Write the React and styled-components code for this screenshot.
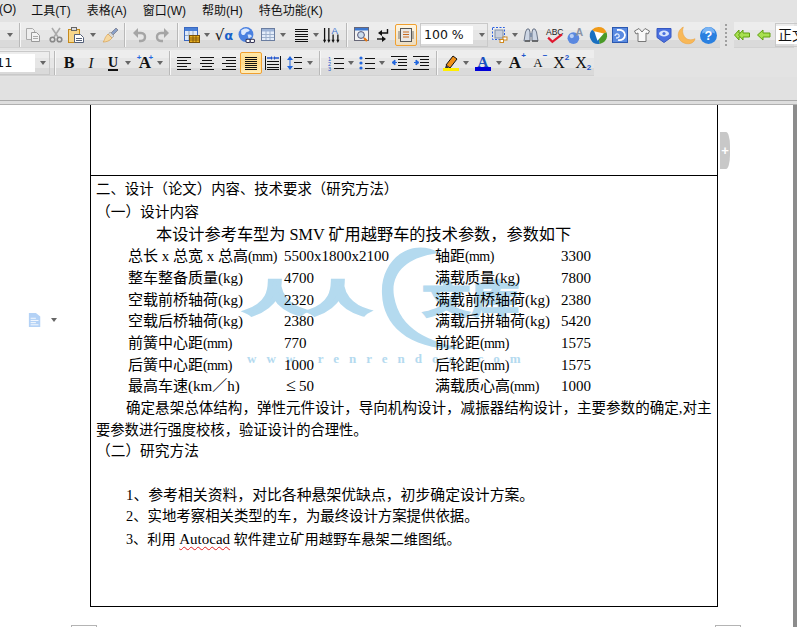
import React from 'react';
import styled, { createGlobalStyle } from 'styled-components';

const Global = createGlobalStyle`
  html, body { margin: 0; height: 100%; overflow: hidden; background: #e3e3e3; }
  #root { height: 100%; }
`;

const Window = styled.div`
  width: 797px;
  height: 627px;
  display: flex;
  flex-direction: column;
  overflow: hidden;
  background: #e3e3e3;
`;

const MenuBar = styled.div`
  height: 18px;
  display: flex;
  align-items: center;
  font: 12px "Liberation Sans", "Noto Sans CJK SC", sans-serif;
  color: #111;
  white-space: nowrap;
`;

const MenuItem = styled.span`
  margin-left: ${p => p.$ml}px;
`;

const Toolbar = styled.div`
  height: 26px;
  margin-top: ${p => p.$mt}px;
  display: flex;
  overflow: hidden;
`;

const Band = styled.div`
  width: ${p => p.$w}px;
  flex: none;
  display: flex;
  align-items: center;
  background: linear-gradient(#ededed 0 30%, #e6e6e6 30% 70%, #dadada 70% 100%);
  box-shadow: inset 0 -1px 0 #d2d2d2;
`;

const Tool = styled.span`
  flex: none;
  width: ${p => p.$w || 16}px;
  height: 16px;
  margin-left: ${p => p.$ml}px;
  display: flex;
  align-items: center;
  justify-content: center;
`;

const Active = styled(Tool)`
  width: 22px;
  height: 22px;
  box-sizing: border-box;
  border: 1px solid #f0a030;
  border-radius: 2px;
  background: ${p => (p.$warm ? 'linear-gradient(#ffe9a8, #ffd98a 50%, #ffeebb)' : 'linear-gradient(#fff6e2, #ecdcc0)')};
`;

const Caret = styled.span`
  flex: none;
  width: 0;
  height: 0;
  margin-left: ${p => p.$ml + 1}px;
  margin-right: 1px;
  border-left: 3px solid transparent;
  border-right: 3px solid transparent;
  border-top: 4px solid #666;
`;

const Sep = styled.span`
  flex: none;
  width: 1px;
  height: 24px;
  margin-left: ${p => p.$ml}px;
  background: #b9b9b9;
  box-shadow: 1px 0 0 #f7f7f7;
`;

const Grip = styled.span`
  flex: none;
  width: 2px;
  height: 22px;
  margin: 2px 7px 0 5px;
  background: repeating-linear-gradient(#a0a0a0 0 2px, transparent 2px 4px);
`;

const Combo = styled.span`
  flex: none;
  width: ${p => p.$w}px;
  height: 24px;
  margin-left: ${p => p.$ml}px;
  box-sizing: border-box;
  border: 1px solid #c9c9c9;
  border-left-width: ${p => (p.$open ? 0 : 1)}px;
  display: flex;
  align-items: center;
`;

const ComboField = styled.span`
  width: ${p => p.$w}px;
  height: 18px;
  flex: none;
  text-indent: ${p => p.$pad}px;
  box-sizing: border-box;
  background: #fff;
  color: #111;
  white-space: nowrap;
  overflow: hidden;
  font: ${p => p.$size || 13}px/18px "DejaVu Sans", "Noto Sans CJK SC", sans-serif;
`;

const Letter = styled.span`
  font: ${p => (p.$italic ? 'italic' : 'normal')} ${p => (p.$bold ? 'bold' : 'normal')} ${p => p.$size || 15}px/16px "Liberation Serif", serif;
  color: #111;
  position: relative;
  ${p => p.$under && 'border-bottom: 2px solid #111; line-height: 13px;'}
`;

const Mark = styled.sup`
  position: absolute;
  left: 100%;
  top: ${p => p.$top}px;
  margin: 0;
  color: #2255cc;
  font: bold 8px/8px "Liberation Sans", sans-serif;
`;

const TwinMark = styled.span`
  position: absolute;
  left: -2px;
  right: -2px;
  top: -1px;
  display: flex;
  justify-content: space-between;
  color: #2266dd;
  font: bold 8px/8px "Liberation Sans", sans-serif;
`;

const Formula = styled.span`
  font: 15px/16px "DejaVu Sans", sans-serif;
  color: #111;
  white-space: nowrap;
  b { color: #1660c8; font: bold 13px/16px "DejaVu Sans", sans-serif; }
`;

const Strip = styled.div`
  height: 23px;
  flex: none;
  margin-top: 1px;
  background: #e1e1e1;
  border-bottom: 1px solid #a9a9a9;
  box-shadow: 0 3px 0 #dedede;
`;

const Workspace = styled.div`
  flex: 1;
  margin-top: 3px;
  display: flex;
  min-height: 0;
  position: relative;
  border-top: 1px solid #b0b0b0;
`;

const Page = styled.div`
  flex: 1;
  background: #fff;
  position: relative;
  overflow: hidden;
`;

const Edge = styled.div`
  width: 4px;
  flex: none;
  background: #8c8c8c;
`;

const Sheet = styled.div`
  width: 628px;
  margin-left: 90px;
  box-sizing: border-box;
  border: solid #000;
  border-width: 0 1px 1px;
  position: relative;
  z-index: 1;
  font-family: "Liberation Serif", "Noto Sans CJK SC", serif;
  color: #000;
`;

const TopCell = styled.div`
  height: 70px;
  border-bottom: 1px solid #000;
`;

const BodyCell = styled.div`
  height: 430px;
  box-sizing: border-box;
  padding: 2px 5px 0;
`;

const Line = styled.div`
  height: ${p => p.$h || 21.8}px;
  line-height: ${p => p.$h || 21.8}px;
  margin-top: ${p => p.$mt || 0}px;
  padding-left: ${p => p.$indent || 0}px;
  font-size: ${p => p.$size || 15}px;
  white-space: nowrap;
`;

const SpecGrid = styled.div`
  display: grid;
  grid-template-columns: 156px 151px 126px 1fr;
  grid-auto-rows: 21.7px;
  padding-left: 32px;
  font-size: 15px;
  line-height: 21.7px;
  white-space: nowrap;
`;

const Unit = styled.span`
  font-size: 14px;
  letter-spacing: -0.6px;
`;

const LessEqual = styled.span`
  display: inline-block;
  width: 13px;
  margin-left: 2px;
  font-size: 18px;
  line-height: 16px;
`;

const Squiggle = styled.span`
  text-decoration: underline wavy #e02020 1px;
  text-underline-offset: 2px;
  font-size: 15px;
`;

const PageCorners = styled.div`
  display: flex;
  margin: 18px 0 0 71px;
  gap: 618px;
`;

const Corner = styled.div`
  width: 24px;
  height: 6px;
  border: 1px solid #b4b4b4;
  border-bottom: 0;
`;

const Watermark = styled.svg`
  position: absolute;
  left: 240px;
  top: 131px;
  width: 300px;
  height: 140px;
  z-index: 0;
`;

const SideTab = styled.div`
  position: absolute;
  left: 720px;
  top: 27px;
  width: 10px;
  height: 37px;
  background: #c8c8c8;
  border-radius: 0 4px 4px 0 / 0 14px 14px 0;
  color: #fff;
  font: bold 13px/37px "Liberation Sans", sans-serif;
  text-align: center;
`;

const MarginHint = styled.div`
  position: absolute;
  left: 28px;
  top: 208px;
  display: flex;
  align-items: center;
  gap: 5px;
`;

const Ico = styled.svg.attrs({ viewBox: '0 0 16 16' })`
  width: ${p => p.$s || 16}px;
  height: ${p => p.$s || 16}px;
  flex: none;
  overflow: visible;
`;

const Rows = ({ y, x1 = 1, x2 = 15, color = '#111' }) => (
  <path d={y.map(v => `M${x1} ${v}.5H${x2}`).join('')} stroke={color} fill="none" />
);

const Copy = () => (
  <Ico>
    <path d="M1.5 1.5h6l2 2v9h-8z" fill="#eee" stroke="#aaa" />
    <path d="M6.5 5.5h5l3 3v6h-8z" fill="#f2f2f2" stroke="#999" />
    <path d="M8 9.5h5M8 11.5h5" stroke="#aaa" />
  </Ico>
);
const Cut = () => (
  <Ico>
    <path d="M4 1l6 9M12 1L6 10" stroke="#aaa" strokeWidth="1.6" fill="none" />
    <circle cx="4.5" cy="12.5" r="2.3" fill="none" stroke="#888" strokeWidth="1.6" />
    <circle cx="11.5" cy="12.5" r="2.3" fill="none" stroke="#888" strokeWidth="1.6" />
  </Ico>
);
const Paste = () => (
  <Ico>
    <rect x="0.5" y="2.5" width="11" height="13" fill="#f7d68a" stroke="#c68a1c" />
    <rect x="3.5" y="0.5" width="5" height="3" fill="#ddd" stroke="#666" />
    <path d="M6.5 7.5h6l3 3v5h-9z" fill="#fff" stroke="#55617a" />
    <path d="M8 11.5h6M8 13.5h6" stroke="#55617a" />
  </Ico>
);
const Brush = () => (
  <Ico>
    <path d="M9 6l5-5 2 2-5 5z" fill="#8aa0c8" stroke="#667" strokeWidth=".6" />
    <path d="M8 5l4 4-2 2-4-3z" fill="#d8d8d8" stroke="#999" strokeWidth=".6" />
    <path d="M6 7l4 4c-2 3-6 4-9 4 2-2 1-4 5-8z" fill="#f6d8a0" stroke="#d8a050" strokeWidth=".7" />
  </Ico>
);
const Undo = ({ flip }) => (
  <Ico style={flip ? { transform: 'scaleX(-1)' } : undefined}>
    <path d="M3 6h6c3 0 4 2 4 4s-1 4-4 4H7" fill="none" stroke="#a5a5a5" strokeWidth="2.4" />
    <path d="M6 1L1 6l5 5z" fill="#a5a5a5" />
  </Ico>
);
const YellowTable = () => (
  <Ico>
    <rect x="0.5" y="0.5" width="13" height="13" fill="#dfe9fa" stroke="#3a68c0" />
    <rect x="1" y="1" width="12" height="3" fill="#4a80d8" />
    <path d="M5 4v9M9 4v9M1 8.5h12" stroke="#9ab" />
    <rect x="5.5" y="8.5" width="10" height="7" fill="#e8b020" stroke="#7a5208" />
    <path d="M5.5 11h10M5.5 13h10M9 8.5v7M12 8.5v7" stroke="#7a5208" strokeWidth=".8" />
  </Ico>
);
const GlobeLink = () => (
  <Ico $s={17}>
    <circle cx="7.5" cy="7" r="7" fill="#4a80e0" />
    <path d="M3 3c3-2 6-2 8 0-1 2-3 1-4 3s-3 2-4 0z" fill="#dce8fc" />
    <path d="M9 7c2 0 4 0 4 2l-3 2z" fill="#cfe0fa" />
    <rect x="7.5" y="11.5" width="4" height="3" rx="1" fill="#fff" stroke="#335" />
    <rect x="11.5" y="11.5" width="4" height="3" rx="1" fill="#fff" stroke="#335" />
  </Ico>
);
const GridTable = () => (
  <Ico>
    <rect x="1.5" y="1.5" width="13" height="12" fill="#e4edfa" stroke="#6a7da0" />
    <rect x="2" y="2" width="12" height="2.5" fill="#9db4d8" />
    <path d="M6 4v9M10 4v9M2 7.5h12M2 10.5h12" stroke="#9db0cc" />
  </Ico>
);
const HeavyRows = () => (
  <Ico>
    <Rows y={[2, 4, 7, 9, 12, 14]} x1={2} x2={15} />
  </Ico>
);
const ColsA = () => (
  <Ico $s={17}>
    <path d="M1.5 1v12M5.5 1v12M9.5 7v6M14 7v6" stroke="#111" strokeWidth="1.2" />
    <path d="M0 12l1.5 3 1.5-3zM4 12l1.5 3 1.5-3zM8 12l1.5 3 1.5-3zM12.5 12l1.5 3 1.5-3z" fill="#111" />
    <text x="8" y="7" fontFamily="Liberation Sans" fontSize="9" fill="#3a70d0">A</text>
  </Ico>
);
const DocSearch = () => (
  <Ico>
    <rect x="0.5" y="0.5" width="14" height="13" fill="#f2f2f2" stroke="#667" />
    <rect x="1" y="1" width="13" height="2.5" fill="#3d78d0" />
    <circle cx="7" cy="8" r="3.4" fill="#cde" stroke="#557" />
    <path d="M10 11l3 3" stroke="#e87810" strokeWidth="2.2" />
  </Ico>
);
const ReturnArrows = () => (
  <Ico>
    <path d="M12.5 2v4H6" fill="none" stroke="#111" strokeWidth="1.4" />
    <path d="M7 3L3 6l4 3z" fill="#111" />
    <path d="M2 12h6" stroke="#111" strokeWidth="1.4" />
    <path d="M7 9l4 3-4 3z" fill="#111" />
  </Ico>
);
const PageFrame = () => (
  <Ico>
    <rect x="2.5" y="1.5" width="11" height="13" fill="#e8e8e8" stroke="#555" />
    <path d="M5 5h6M5 7.5h6M5 10h6" stroke="#c86a20" />
    <path d="M1 4v8M15 4v8" stroke="#777" />
  </Ico>
);
const DashedSelect = () => (
  <Ico>
    <rect x="0.5" y="0.5" width="12" height="12" fill="none" stroke="#2a60e0" strokeDasharray="2 1.5" />
    <rect x="3" y="3" width="8" height="8" fill="#c9cfdb" stroke="#8090a8" />
    <rect x="11" y="10" width="4" height="3" fill="#fff" stroke="#d08a20" />
    <rect x="8" y="12.5" width="3.5" height="3" fill="#fff" stroke="#d08a20" />
  </Ico>
);
const Binoculars = () => (
  <Ico>
    <path d="M1 14l1.5-9 1.5-3h2l1 3v9zM9 5l1-3h2l1.5 3L15 14H9z" fill="#cdd6e4" stroke="#6c7688" />
    <path d="M7 6h2v4H7z" fill="#8090a8" />
    <path d="M2 14h5M9 14h6" stroke="#555" strokeWidth="1.5" />
  </Ico>
);
const SpellCheck = () => (
  <Ico $s={17}>
    <text x="0" y="7.5" fontFamily="Liberation Sans" fontSize="8" fill="#222">ABC</text>
    <path d="M2 10l4 4 9-7" fill="none" stroke="#e01830" strokeWidth="2" />
  </Ico>
);
const BallA = () => (
  <Ico $s={17}>
    <circle cx="6" cy="10.5" r="5.5" fill="#5a88e0" />
    <circle cx="4.5" cy="8.5" r="2" fill="#b9d0f6" />
    <text x="8" y="8" fontFamily="Liberation Sans" fontWeight="bold" fontSize="10" fill="#8a94a6">A</text>
  </Ico>
);
const ColorWheel = () => (
  <Ico $s={17}>
    <path d="M8 0a8 8 0 0 1 7.5 5L8 8 2 2.5A8 8 0 0 1 8 0z" fill="#f09a18" />
    <path d="M15.5 5A8 8 0 0 1 9 15.9L8 8z" fill="#4a9a28" />
    <path d="M9 15.9A8 8 0 0 1 2 2.5L8 8z" fill="#1a70c0" />
    <path d="M4 4l9 2-6 7z" fill="#fff" />
  </Ico>
);
const BlueD = () => (
  <Ico>
    <rect x="0.5" y="0.5" width="15" height="15" fill="#5a8ae0" stroke="#2a58b0" />
    <path d="M5 3c5-1 8 2 8 5s-3 6-7 5" fill="none" stroke="#fff" strokeWidth="1.8" />
    <path d="M3 9c0-2 3-3 4-1s-1 3-3 3" fill="none" stroke="#dce8fc" strokeWidth="1.4" />
  </Ico>
);
const Shirt = () => (
  <Ico>
    <path d="M5 1.5L.5 4l1.5 3 2-1v8.5h8V6l2 1 1.5-3L11 1.5 8 5z" fill="#f8f8f8" stroke="#777" />
  </Ico>
);
const Shield = () => (
  <Ico>
    <path d="M1 1.5h14v9L8 15.5 1 10.5z" fill="#4a70e0" stroke="#3658c0" />
    <ellipse cx="8" cy="6.5" rx="5" ry="3" fill="#d8e4fc" />
    <circle cx="8" cy="6.5" r="1.6" fill="#4a70e0" />
  </Ico>
);
const Moon = () => (
  <Ico $s={17}>
    <path d="M5 0C1 2-1 7 1 11s8 6 12 4c2-1 3-3 3-4-4 2-8 1-10-2S4 3 5 0z" fill="#f8b858" stroke="#e8a040" strokeWidth=".5" />
  </Ico>
);
const Help = () => (
  <Ico $s={17}>
    <circle cx="8" cy="8" r="8" fill="#2a80e0" />
    <path d="M2 6a6 6 0 0 1 12 0c-4-2-8-2-12 0z" fill="#7ab4f4" />
    <text x="8" y="12.5" textAnchor="middle" fontFamily="Liberation Sans" fontWeight="bold" fontSize="12" fill="#fff">?</text>
  </Ico>
);
const GreenLeft = ({ double }) => (
  <Ico>
    {double && <path d="M5 3L0.5 8 5 13v-3h2V6H5z" fill="#a8e050" stroke="#60a010" />}
    <path d={double ? 'M9 3L4.5 8 9 13v-3h6.500V6H9z' : 'M7 3L1.500 8 7 13v-3h7V6H7z'} fill="#a8e050" stroke="#60a010" />
  </Ico>
);
const AlignLeft = () => <Ico><Rows y={[2, 8, 14]} /><Rows y={[5, 11]} x2={11} /></Ico>;
const AlignCenter = () => <Ico><Rows y={[2, 8, 14]} /><Rows y={[5, 11]} x1={3} x2={13} /></Ico>;
const AlignRight = () => <Ico><Rows y={[2, 8, 14]} /><Rows y={[5, 11]} x1={5} x2={15} /></Ico>;
const Justify = () => <Ico><Rows y={[2, 4, 6, 8, 10, 12, 14]} x1={2} x2={14} color="#111" /></Ico>;
const Distribute = () => (
  <Ico>
    <path d="M.5 1v14M15.500 1v14" stroke="#111" />
    <Rows y={[6, 9, 12, 14]} x1={2} x2={14} />
    <path d="M2 3h4M10 3h4" stroke="#2255cc" strokeWidth="1.4" />
    <path d="M6 1l2 2-2 2zM10 1L8 3l2 2z" fill="#2255cc" />
  </Ico>
);
const Spacing = () => (
  <Ico>
    <path d="M3 1L0 5h6zM3 15L0 11h6z" fill="#2266dd" />
    <path d="M3 4v8" stroke="#2266dd" />
    <Rows y={[2, 7, 13]} x1={7} x2={15} />
  </Ico>
);
const NumList = () => (
  <Ico>
    <text x="0" y="5.500" fontFamily="Liberation Sans" fontSize="5.500" fill="#2255cc">1</text>
    <text x="0" y="10.500" fontFamily="Liberation Sans" fontSize="5.500" fill="#2255cc">2</text>
    <text x="0" y="15.500" fontFamily="Liberation Sans" fontSize="5.500" fill="#2255cc">3</text>
    <Rows y={[3, 8, 13]} x1={6} x2={16} />
  </Ico>
);
const BulletList = () => (
  <Ico>
    <circle cx="2" cy="3" r="1.6" fill="#2266dd" />
    <circle cx="2" cy="8" r="1.6" fill="#2266dd" />
    <circle cx="2" cy="13" r="1.6" fill="#2266dd" />
    <Rows y={[3, 8, 13]} x1={6} x2={16} />
  </Ico>
);
const Indent = ({ inc }) => (
  <Ico>
    <Rows y={[1, 14]} x1={0} x2={16} />
    <Rows y={[4, 7, 10]} x1={7} x2={16} />
    {inc
      ? <path d="M1 7.500h3M3 5l3 2.500L3 10z" fill="#2266dd" stroke="#2266dd" />
      : <path d="M3 7.500h3M4 5L1 7.500 4 10z" fill="#2266dd" stroke="#2266dd" />}
  </Ico>
);
const Highlighter = () => (
  <Ico>
    <path d="M3 10l7-9 4 3-7 9z" fill="#f09018" stroke="#111" strokeWidth="1" />
    <path d="M3 10l-1 3 4 0z" fill="#333" />
    <rect x="0" y="13" width="16" height="3" fill="#ffee00" />
  </Ico>
);
const FontColor = () => (
  <Ico>
    <text x="8" y="11.500" textAnchor="middle" fontFamily="Liberation Serif" fontWeight="bold" fontSize="15" fill="#1a50c0">A</text>
    <rect x="0" y="12" width="16" height="4" fill="#0000d8" />
  </Ico>
);
const DocHint = () => (
  <Ico $s={14}>
    <path d="M1 0h8l5 4v12H1z" fill="#b4d2f6" />
    <path d="M3 6h6M3 8.500h9M3 11h6M3 13.500h9" stroke="#fff" />
  </Ico>
);

const specs = [
  ['总长 x 总宽 x 总高(mm)', '5500x1800x2100', '轴距(mm)', '3300'],
  ['整车整备质量(kg)', '4700', '满载质量(kg)', '7800'],
  ['空载前桥轴荷(kg)', '2320', '满载前桥轴荷(kg)', '2380'],
  ['空载后桥轴荷(kg)', '2380', '满载后拼轴荷(kg)', '5420'],
  ['前簧中心距(mm)', '770', '前轮距(mm)', '1575'],
  ['后簧中心距(mm)', '1000', '后轮距(mm)', '1575'],
  ['最高车速(km／h)', <><LessEqual>≤</LessEqual>50</>, '满载质心高(mm)', '1000'],
];

const menus = [
  ['(O)', -1],
  ['工具(T)', 15],
  ['表格(A)', 16],
  ['窗口(W)', 16],
  ['帮助(H)', 16],
  ['特色功能(K)', 16],
];

// the (mm) in the document is set narrower than the rest of the label
const SpecCell = ({ value }) => {
  if (typeof value === 'string' && value.endsWith('(mm)')) {
    return <span>{value.slice(0, -4)}<Unit>(mm)</Unit></span>;
  }
  return <span>{value}</span>;
};

const App = () => (
  <Window>
    <Global />
    <MenuBar>
      {menus.map(([label, ml]) => <MenuItem key={label} $ml={ml}>{label}</MenuItem>)}
    </MenuBar>

    <Toolbar $mt={4}>
      <Band $w={720}>
        <Caret $ml={6} />
        <Sep $ml={5} />
        <Tool $ml={5}><Copy /></Tool>
        <Tool $ml={7}><Cut /></Tool>
        <Tool $ml={4}><Paste /></Tool>
        <Caret $ml={5} />
        <Tool $ml={5}><Brush /></Tool>
        <Sep $ml={6} />
        <Tool $ml={7}><Undo /></Tool>
        <Tool $ml={6}><Undo flip /></Tool>
        <Sep $ml={7} />
        <Tool $ml={6}><YellowTable /></Tool>
        <Caret $ml={3} />
        <Tool $ml={5}><Formula>√<b>α</b></Formula></Tool>
        <Tool $ml={6}><GlobeLink /></Tool>
        <Tool $ml={6}><GridTable /></Tool>
        <Caret $ml={3} />
        <Tool $ml={6}><HeavyRows /></Tool>
        <Caret $ml={3} />
        <Tool $ml={3}><ColsA /></Tool>
        <Sep $ml={7} />
        <Tool $ml={7}><DocSearch /></Tool>
        <Tool $ml={5}><ReturnArrows /></Tool>
        <Active $ml={4}><PageFrame /></Active>
        <Combo $ml={3} $w={68}>
          <ComboField $w={52} $pad={3} $size={12.5}>100 %</ComboField>
          <Caret $ml={5} />
        </Combo>
        <Tool $ml={4}><DashedSelect /></Tool>
        <Caret $ml={3} />
        <Tool $ml={4}><Binoculars /></Tool>
        <Tool $ml={7}><SpellCheck /></Tool>
        <Tool $ml={5}><BallA /></Tool>
        <Tool $ml={7}><ColorWheel /></Tool>
        <Tool $ml={6}><BlueD /></Tool>
        <Tool $ml={6}><Shirt /></Tool>
        <Tool $ml={6}><Shield /></Tool>
        <Tool $ml={6}><Moon /></Tool>
        <Tool $ml={6}><Help /></Tool>
      </Band>
      <Grip />
      <Band $w={60}>
        <Tool $ml={0}><GreenLeft double /></Tool>
        <Tool $ml={6}><GreenLeft /></Tool>
        <Combo $ml={3} $w={40}>
          <ComboField $w={38} $pad={2} $size={14}>正文</ComboField>
        </Combo>
      </Band>
    </Toolbar>

    <Toolbar $mt={2}>
      <Band $w={594}>
        <Combo $ml={0} $w={50} $open>
          <ComboField $w={35} $pad={-4} $size={13}>11</ComboField>
          <Caret $ml={4} />
        </Combo>
        <Sep $ml={4} />
        <Tool $ml={6}><Letter $bold $size={16}>B</Letter></Tool>
        <Tool $ml={6}><Letter $italic $size={15}>I</Letter></Tool>
        <Tool $ml={6}><Letter $bold $under $size={14}>U</Letter></Tool>
        <Caret $ml={3} />
        <Tool $ml={5}><Letter $bold $size={17}>A<TwinMark><span>+</span><span>+</span></TwinMark></Letter></Tool>
        <Caret $ml={3} />
        <Sep $ml={5} />
        <Tool $ml={6}><AlignLeft /></Tool>
        <Tool $ml={7}><AlignCenter /></Tool>
        <Tool $ml={6}><AlignRight /></Tool>
        <Active $ml={3} $warm><Justify /></Active>
        <Tool $ml={3}><Distribute /></Tool>
        <Tool $ml={6}><Spacing /></Tool>
        <Caret $ml={3} />
        <Sep $ml={5} />
        <Tool $ml={8}><NumList /></Tool>
        <Caret $ml={3} />
        <Tool $ml={4}><BulletList /></Tool>
        <Caret $ml={3} />
        <Tool $ml={5}><Indent /></Tool>
        <Tool $ml={6}><Indent inc /></Tool>
        <Sep $ml={7} />
        <Tool $ml={6}><Highlighter /></Tool>
        <Caret $ml={3} />
        <Tool $ml={5}><FontColor /></Tool>
        <Caret $ml={4} />
        <Tool $ml={4}><Letter $bold $size={17}>A<Mark $top={-3}>+</Mark></Letter></Tool>
        <Tool $ml={7}><Letter $size={13}>A<Mark $top={-3}>−</Mark></Letter></Tool>
        <Tool $ml={5}><Letter $size={16}>X<Mark $top={-1}>2</Mark></Letter></Tool>
        <Tool $ml={6}><Letter $size={16}>X<Mark $top={9}>2</Mark></Letter></Tool>
      </Band>
    </Toolbar>

    <Strip />

    <Workspace>
      <Page>
        <Watermark viewBox="0 0 300 140">
          <g fill="#b4daef" stroke="#b4daef" fontFamily="Noto Sans CJK SC" fontWeight="700">
            <text transform="translate(4 76) scale(1.05 .62)" fontSize="60" strokeWidth="5">人</text>
            <text transform="translate(67 76) scale(1.05 .62)" fontSize="60" strokeWidth="5">人</text>
            <text transform="translate(182 77) scale(1.05 .85)" fontSize="46" strokeWidth="2">文</text>
            <text transform="translate(231 77) scale(1.05 .85)" fontSize="46" strokeWidth="2">库</text>
          </g>
          <path fill="#b4daef" d="M200 17C170 0 140 25 142 58 143 90 170 115 223 113 190 105 160 95 154 60 150 35 170 20 200 17Z" />
          <text x="7" y="127" fill="#b4daef" fontFamily="Liberation Serif" fontWeight="bold" fontSize="13" letterSpacing="10">www.renrendoc.com</text>
        </Watermark>

        <Sheet>
          <TopCell />
          <BodyCell>
            <Line $size={14.4} $h={22}>二、设计（论文）内容、技术要求（研究方法）</Line>
            <Line $size={14.7} $h={22} $mt={1}>（一）设计内容</Line>
            <Line $size={16.2} $mt={1.5} $indent={60}>本设计参考车型为 SMV 矿用越野车的技术参数，参数如下</Line>
            <SpecGrid>
              {specs.flat().map((cell, i) => <SpecCell key={i} value={cell} />)}
            </SpecGrid>
            <Line $size={14.55} $indent={30}>确定悬架总体结构，弹性元件设计，导向机构设计，减振器结构设计，主要参数的确定,对主</Line>
            <Line $size={14.3} $h={21}>要参数进行强度校核，验证设计的合理性。</Line>
            <Line $size={14.7}>（二）研究方法</Line>
            <Line />
            <Line $size={14.85} $indent={30}>1、参考相关资料，对比各种悬架优缺点，初步确定设计方案。</Line>
            <Line $size={14.4} $indent={30}>2、实地考察相关类型的车，为最终设计方案提供依据。</Line>
            <Line $size={14.2} $mt={0.5} $indent={30}>3、利用 <Squiggle>Autocad</Squiggle> 软件建立矿用越野车悬架二维图纸。</Line>
          </BodyCell>
        </Sheet>

        <PageCorners>
          <Corner />
          <Corner />
        </PageCorners>

        <SideTab>+</SideTab>
        <MarginHint>
          <DocHint />
          <Caret $ml={3} />
        </MarginHint>
      </Page>
      <Edge />
    </Workspace>
  </Window>
);

export default App;
